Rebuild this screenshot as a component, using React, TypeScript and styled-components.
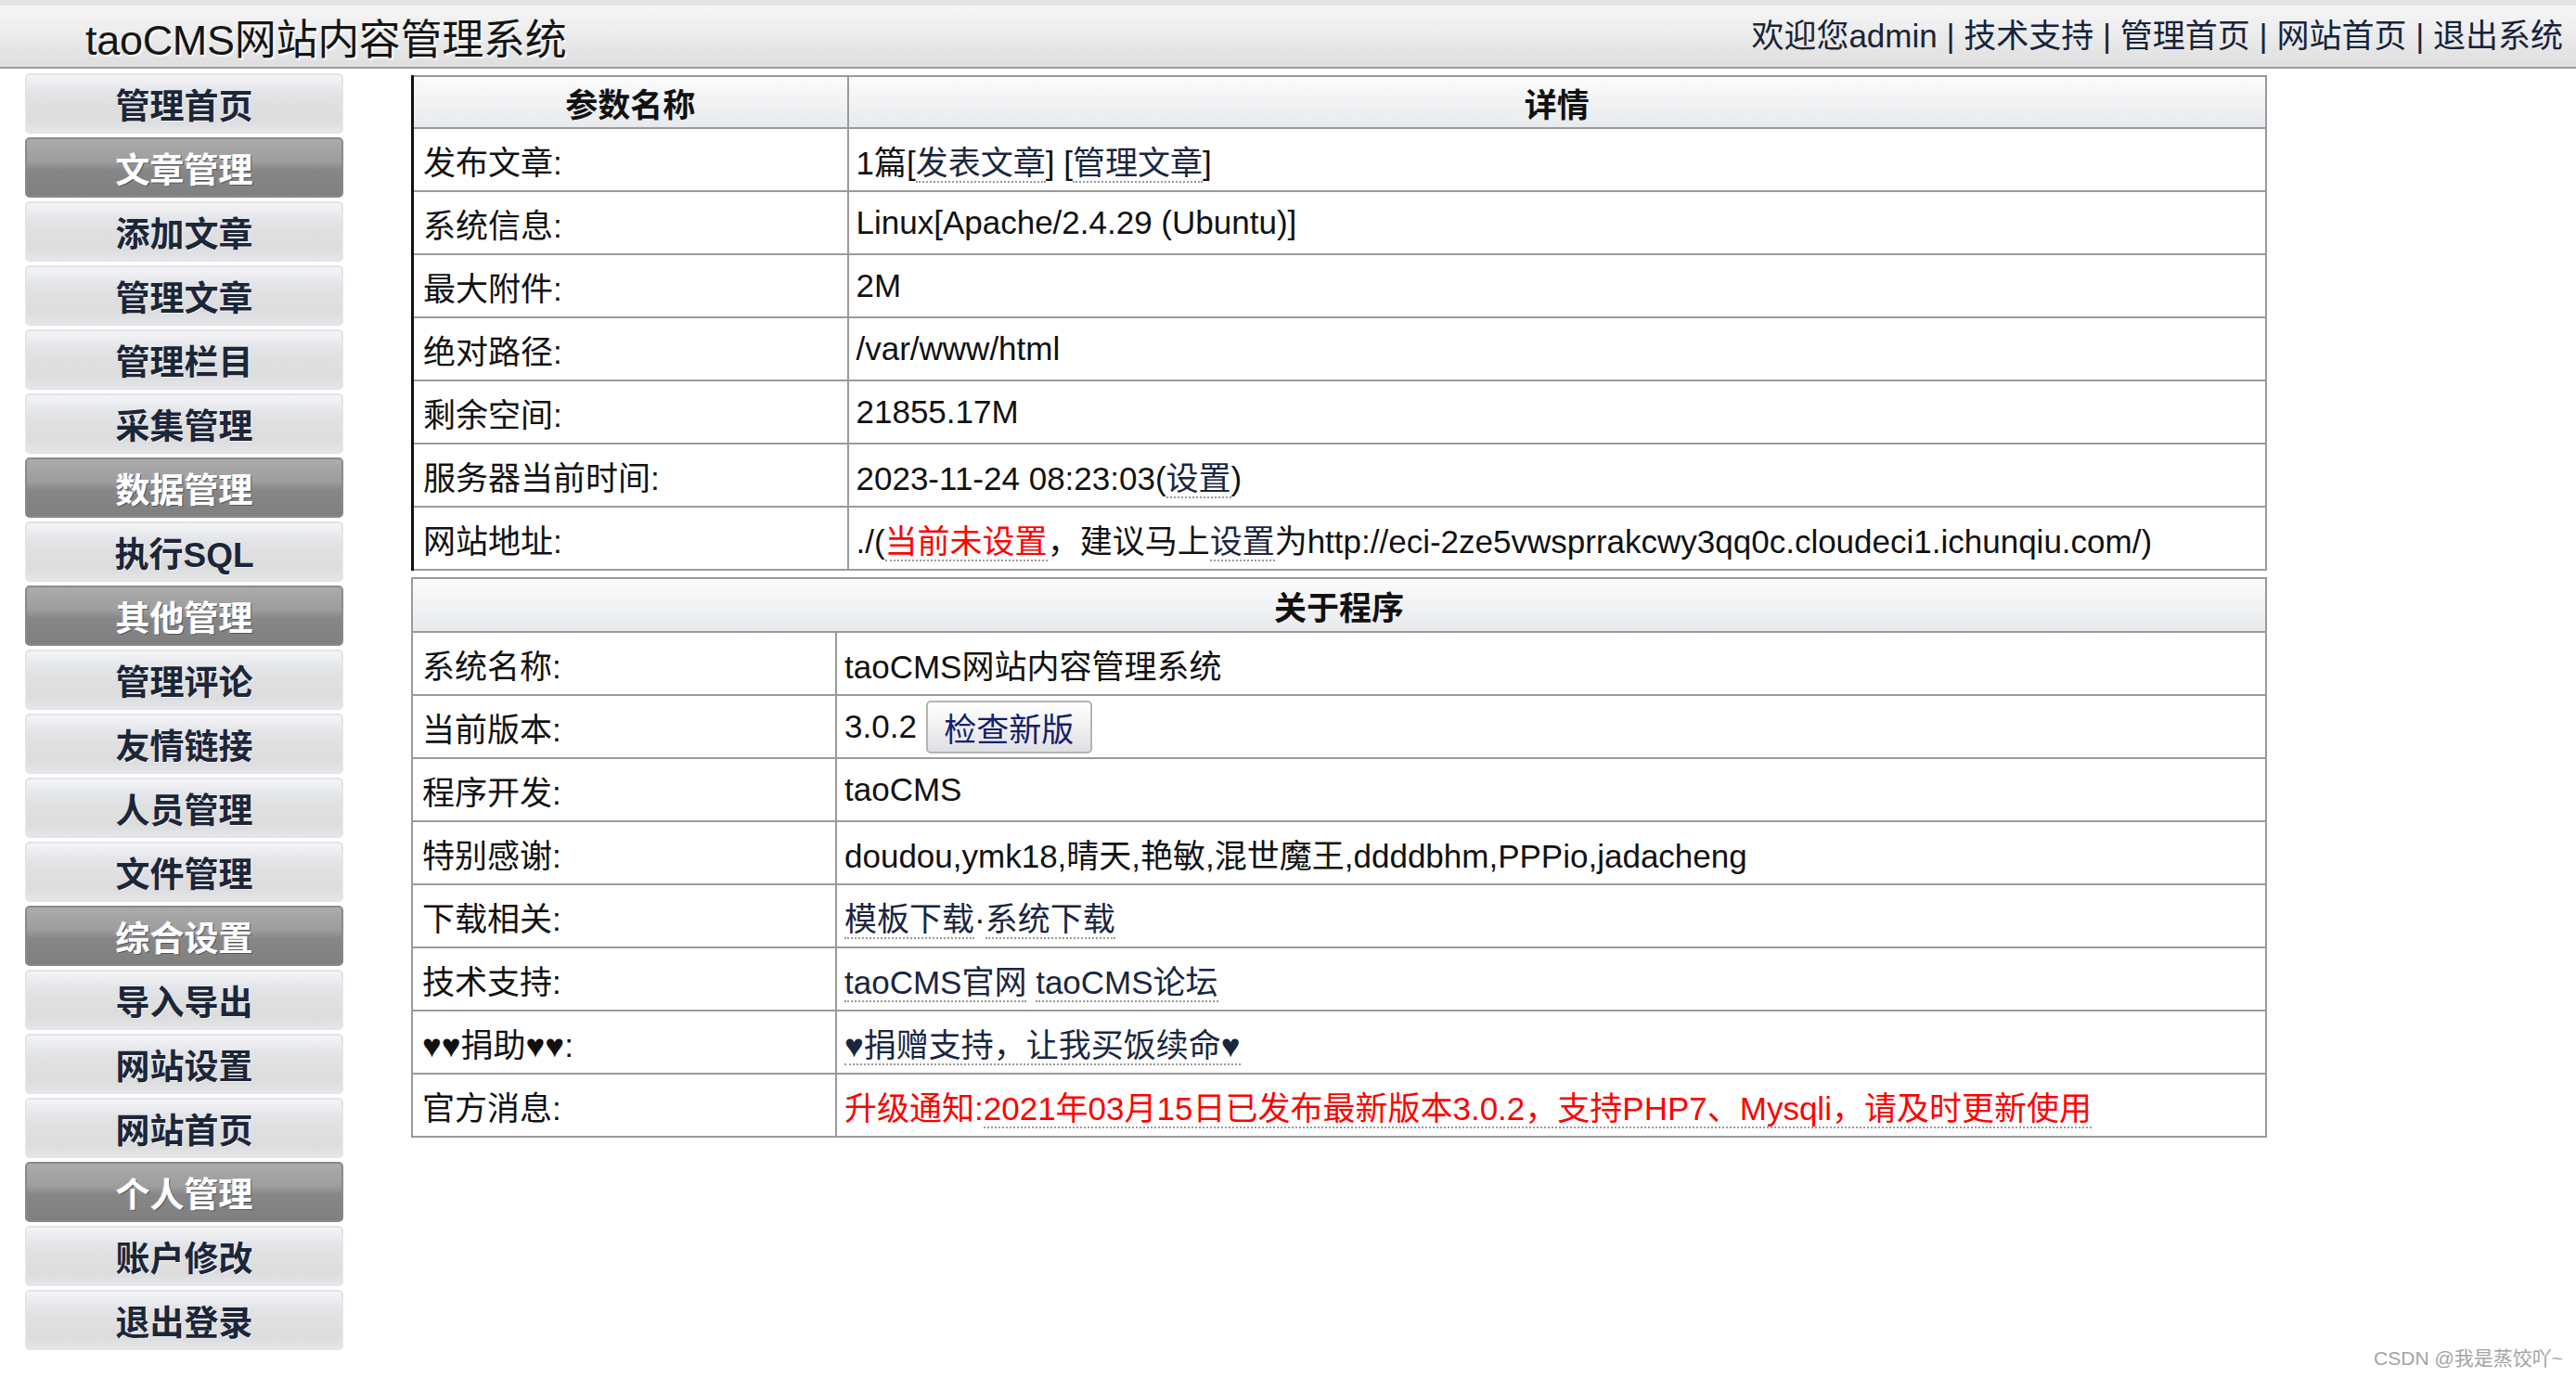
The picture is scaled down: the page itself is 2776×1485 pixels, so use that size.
import styled, { createGlobalStyle } from 'styled-components';

const GlobalStyle = createGlobalStyle`
  html, body {
    margin: 0;
    padding: 0;
    background: #fff;
  }
  body {
    font-family: 'Liberation Sans', Arial, 'Noto Sans CJK SC', sans-serif;
    color: #000;
  }
`;

const Page = styled.div`
  position: relative;
  min-height: 1485px;
  background: #fff;
`;

const Header = styled.header`
  height: 66px;
  border-top: 6px solid #e4e4e2;
  border-bottom: 2px solid #9c9c9c;
  background: linear-gradient(#f6f6f6 0%, #ececec 45%, #dedede 100%);
  display: flex;
  align-items: center;
  justify-content: space-between;
  padding: 0 14px 0 92px;
`;

const Title = styled.h1`
  margin: 0;
  font-size: 45px;
  font-weight: 400;
  color: #151515;
  text-shadow: 1px 1px 0 #fff, 2px 2px 1px rgba(255, 255, 255, 0.8);
  letter-spacing: -0.3px;
`;

const TopLinks = styled.div`
  font-size: 35px;
  color: #1b2436;
  padding-bottom: 8px;
  white-space: nowrap;
`;

const TopLink = styled.a`
  color: #16233c;
  text-decoration: none;
`;

const Body = styled.div`
  display: flex;
  align-items: flex-start;
  padding-left: 27px;
`;

const Sidebar = styled.nav`
  width: 343px;
  padding-top: 5px;
  display: flex;
  flex-direction: column;
  gap: 4px;
`;

const MenuItem = styled.a<{ $group?: boolean }>`
  box-sizing: border-box;
  height: 65px;
  display: flex;
  align-items: center;
  justify-content: center;
  border-radius: 5px;
  font-size: 37px;
  font-weight: 700;
  text-decoration: none;
  border: 2px solid ${p => (p.$group ? '#8a8a8a' : '#e4e4e6')};
  color: ${p => (p.$group ? '#fff' : '#1c2639')};
  background: ${p =>
    p.$group
      ? 'linear-gradient(#ababab 0%, #9d9d9d 40%, #868686 55%, #808080 100%)'
      : 'linear-gradient(#f5f5f7 0%, #e2e4e9 30%, #dfdfdf 55%, #dcdcdc 80%, #e4e6eb 100%)'};
  text-shadow: ${p =>
    p.$group ? '1px 1px 0 #555, -1px 0 0 rgba(200,220,255,0.4)' : '1px 1px 0 rgba(255,255,255,0.6)'};
`;

const Main = styled.main`
  margin-left: 73px;
  padding-top: 7px;
  display: flex;
  flex-direction: column;
  gap: 7px;
`;

const InfoTable = styled.table<{ $dark?: boolean }>`
  width: 2000px;
  border-collapse: collapse;
  font-size: 35px;
  border: 2px solid #9a9a9a;
  border-left: ${p => (p.$dark ? '3px solid #111' : '2px solid #9a9a9a')};
`;

const HeadRow = styled.tr<{ $h: number }>`
  height: ${p => p.$h}px;
  background: linear-gradient(#fcfcfc 0%, #f3f4f5 40%, #e7eaed 100%);
`;

const Th = styled.th`
  border: 2px solid #9a9a9a;
  font-weight: 700;
  font-size: 35px;
  color: #111;
  padding: 0;
  text-align: center;
`;

const Row = styled.tr`
  height: 68px;
`;

const LabelCell = styled.td<{ $w: number }>`
  width: ${p => p.$w}px;
  box-sizing: border-box;
  border: 2px solid #9a9a9a;
  padding: 0 10px;
  color: #111;
  white-space: nowrap;
`;

const ValueCell = styled.td`
  border: 2px solid #9a9a9a;
  padding: 0 8px;
  color: #111;
  white-space: nowrap;
`;

const Link = styled.a<{ $red?: boolean }>`
  color: ${p => (p.$red ? '#ff0000' : '#1a2640')};
  text-decoration: none;
  border-bottom: 2px dotted #9a9a9a;
`;

const Red = styled.span`
  color: #ff0000;
`;

const VersionLine = styled.div`
  display: flex;
  align-items: center;
  gap: 10px;
`;

const CheckButton = styled.button`
  box-sizing: border-box;
  height: 57px;
  width: 179px;
  padding: 0;
  font-family: inherit;
  font-size: 35px;
  color: #14206a;
  border: 2px solid #b4b4b4;
  border-radius: 5px;
  background: linear-gradient(#ffffff 0%, #f2f2f4 45%, #dedfe3 100%);
`;

const Watermark = styled.div`
  position: absolute;
  right: 14px;
  bottom: 8px;
  font-size: 21px;
  color: #a4a4a4;
`;

const menu: [string, boolean][] = [
  ['管理首页', false],
  ['文章管理', true],
  ['添加文章', false],
  ['管理文章', false],
  ['管理栏目', false],
  ['采集管理', false],
  ['数据管理', true],
  ['执行SQL', false],
  ['其他管理', true],
  ['管理评论', false],
  ['友情链接', false],
  ['人员管理', false],
  ['文件管理', false],
  ['综合设置', true],
  ['导入导出', false],
  ['网站设置', false],
  ['网站首页', false],
  ['个人管理', true],
  ['账户修改', false],
  ['退出登录', false],
];

export default function App() {
  return (
    <Page>
      <GlobalStyle />
      <Header>
        <Title>taoCMS网站内容管理系统</Title>
        <TopLinks>
          欢迎您admin | <TopLink>技术支持</TopLink> | <TopLink>管理首页</TopLink> |{' '}
          <TopLink>网站首页</TopLink> | <TopLink>退出系统</TopLink>
        </TopLinks>
      </Header>

      <Body>
        <Sidebar>
          {menu.map(([label, group]) => (
            <MenuItem key={label} $group={group}>
              {label}
            </MenuItem>
          ))}
        </Sidebar>

        <Main>
          <InfoTable $dark>
            <tbody>
              <HeadRow $h={56}>
                <Th>参数名称</Th>
                <Th>详情</Th>
              </HeadRow>
              <Row>
                <LabelCell $w={469}>发布文章:</LabelCell>
                <ValueCell>
                  1篇[<Link>发表文章</Link>] [<Link>管理文章</Link>]
                </ValueCell>
              </Row>
              <Row>
                <LabelCell $w={469}>系统信息:</LabelCell>
                <ValueCell>Linux[Apache/2.4.29 (Ubuntu)]</ValueCell>
              </Row>
              <Row>
                <LabelCell $w={469}>最大附件:</LabelCell>
                <ValueCell>2M</ValueCell>
              </Row>
              <Row>
                <LabelCell $w={469}>绝对路径:</LabelCell>
                <ValueCell>/var/www/html</ValueCell>
              </Row>
              <Row>
                <LabelCell $w={469}>剩余空间:</LabelCell>
                <ValueCell>21855.17M</ValueCell>
              </Row>
              <Row>
                <LabelCell $w={469}>服务器当前时间:</LabelCell>
                <ValueCell>
                  2023-11-24 08:23:03(<Link>设置</Link>)
                </ValueCell>
              </Row>
              <Row>
                <LabelCell $w={469}>网站地址:</LabelCell>
                <ValueCell>
                  ./(<Link $red>当前未设置</Link>，建议马上<Link>设置</Link>为http://eci-2ze5vwsprrakcwy3qq0c.cloudeci1.ichunqiu.com/)
                </ValueCell>
              </Row>
            </tbody>
          </InfoTable>

          <InfoTable>
            <tbody>
              <HeadRow $h={58}>
                <Th colSpan={2}>关于程序</Th>
              </HeadRow>
              <Row>
                <LabelCell $w={457}>系统名称:</LabelCell>
                <ValueCell>taoCMS网站内容管理系统</ValueCell>
              </Row>
              <Row>
                <LabelCell $w={457}>当前版本:</LabelCell>
                <ValueCell>
                  <VersionLine>
                    3.0.2
                    <CheckButton>检查新版</CheckButton>
                  </VersionLine>
                </ValueCell>
              </Row>
              <Row>
                <LabelCell $w={457}>程序开发:</LabelCell>
                <ValueCell>taoCMS</ValueCell>
              </Row>
              <Row>
                <LabelCell $w={457}>特别感谢:</LabelCell>
                <ValueCell>doudou,ymk18,晴天,艳敏,混世魔王,ddddbhm,PPPio,jadacheng</ValueCell>
              </Row>
              <Row>
                <LabelCell $w={457}>下载相关:</LabelCell>
                <ValueCell>
                  <Link>模板下载</Link>·<Link>系统下载</Link>
                </ValueCell>
              </Row>
              <Row>
                <LabelCell $w={457}>技术支持:</LabelCell>
                <ValueCell>
                  <Link>taoCMS官网</Link> <Link>taoCMS论坛</Link>
                </ValueCell>
              </Row>
              <Row>
                <LabelCell $w={457}>♥♥捐助♥♥:</LabelCell>
                <ValueCell>
                  <Link>♥捐赠支持，让我买饭续命♥</Link>
                </ValueCell>
              </Row>
              <Row>
                <LabelCell $w={457}>官方消息:</LabelCell>
                <ValueCell>
                  <Red>升级通知:</Red>
                  <Link $red>2021年03月15日已发布最新版本3.0.2，支持PHP7、Mysqli，请及时更新使用</Link>
                </ValueCell>
              </Row>
            </tbody>
          </InfoTable>
        </Main>
      </Body>

      <Watermark>CSDN @我是蒸饺吖~</Watermark>
    </Page>
  );
}
